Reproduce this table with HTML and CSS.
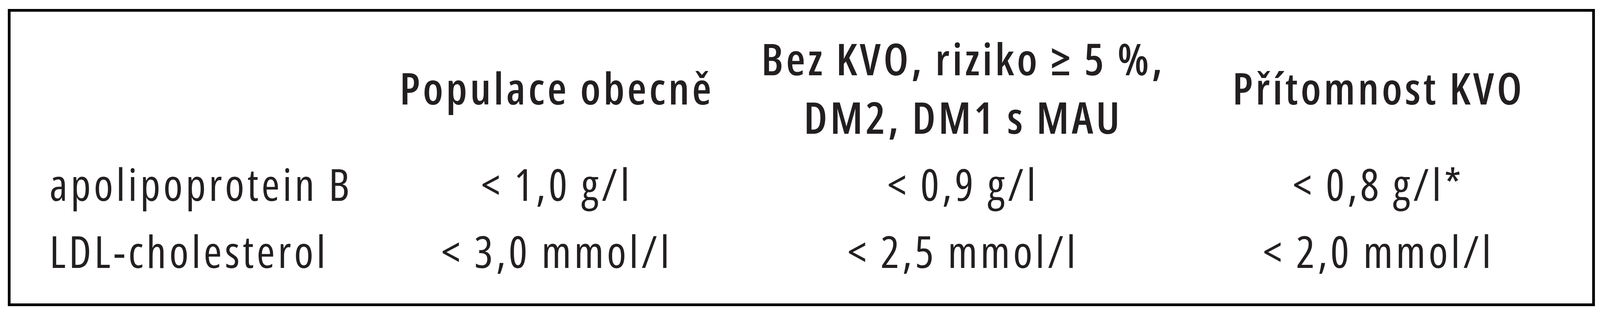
FILE: index.html
```html
<!DOCTYPE html>
<html lang="cs">
<head>
<meta charset="utf-8">
<title>Cílové hodnoty</title>
<link rel="stylesheet" href="styles.css">
</head>
<body>
<div class="frame">
  <div class="grid">
    <div class="head label"></div>
    <div class="head">Populace obecně</div>
    <div class="head">Bez KVO, riziko ≥ 5 %,<br>DM2, DM1 s MAU</div>
    <div class="head">Přítomnost KVO</div>

    <div class="cell label">apolipoprotein B</div>
    <div class="cell">&lt; 1,0 g/l</div>
    <div class="cell">&lt; 0,9 g/l</div>
    <div class="cell">&lt; 0,8 g/l*</div>

    <div class="cell label">LDL-cholesterol</div>
    <div class="cell">&lt; 3,0 mmol/l</div>
    <div class="cell">&lt; 2,5 mmol/l</div>
    <div class="cell">&lt; 2,0 mmol/l</div>
  </div>
</div>
</body>
</html>
```

FILE: styles.css
```css
html, body {
  margin: 0;
  padding: 0;
  background: #ffffff;
}

body {
  padding: 23px 0.32vw 0 0.49vw;
}

.frame {
  height: 748px;
  border: 7px solid #000000;
  background: #ffffff;
  box-sizing: content-box;
  font-family: "Open Sans", "Noto Sans", sans-serif;
  font-size: 113px;
  font-stretch: 75%;
  color: #231f20;
}

.grid {
  display: grid;
  grid-template-columns: 1000fr 1200fr 1174fr 1254fr;
  grid-template-rows: auto 172px 172px;
  padding-top: 44px;
}

.head {
  font-weight: 600;
  letter-spacing: 7px;
  line-height: 150px;
  text-align: center;
  display: flex;
  align-items: center;
  justify-content: center;
  margin-bottom: 11px;
  white-space: nowrap;
}

.cell {
  font-weight: 400;
  letter-spacing: 7.5px;
  line-height: 172px;
  text-align: center;
  white-space: nowrap;
}

.label {
  text-align: left;
  justify-content: flex-start;
  padding-left: 2.436vw;
}
```
